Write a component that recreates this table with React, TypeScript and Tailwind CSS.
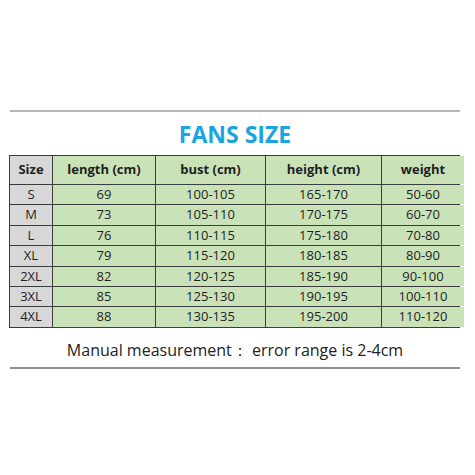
import React from "react";

const rows = [
  ["S", "69", "100-105", "165-170", "50-60"],
  ["M", "73", "105-110", "170-175", "60-70"],
  ["L", "76", "110-115", "175-180", "70-80"],
  ["XL", "79", "115-120", "180-185", "80-90"],
  ["2XL", "82", "120-125", "185-190", "90-100"],
  ["3XL", "85", "125-130", "190-195", "100-110"],
  ["4XL", "88", "130-135", "195-200", "110-120"],
];

const headers = ["Size", "length\u00a0(cm)", "bust\u00a0(cm)", "height\u00a0(cm)", "weight"];

const App: React.FC = () => {
  return (
    <div
      className="w-[475px] h-[475px] bg-white pt-[110px] px-[10px] text-[#1f1f1f]"
      style={{ fontFamily: '"Open Sans", "Noto Sans", sans-serif' }}
    >
      <div className="w-[450px] border-t-2 border-[#b5b5b5]">
        <h1 className="text-center text-[23px] font-bold text-[#1ba3e4] leading-none pt-[11px] pb-[9px]">
          FANS SIZE
        </h1>
        <div className="grid grid-cols-[42px_102px_109px_115px_82px] gap-px bg-[#3c3c3c] border border-[#3c3c3c] w-[451px] -ml-px">
          {headers.map((h, i) => (
            <div
              key={h}
              className={`h-[28px] flex items-center justify-center text-[13px] font-bold ${
                i === 0 ? "bg-[#d8d8d8]" : "bg-[#c9e2b8]"
              }`}
            >
              {h}
            </div>
          ))}
          {rows.map((r) =>
            r.map((c, i) => (
              <div
                key={r[0] + i}
                className={`h-[19.4px] flex items-center justify-center text-[13px] ${
                  i === 0 ? "bg-[#d8d8d8]" : "bg-[#c9e2b8]"
                }`}
              >
                {c}
              </div>
            ))
          )}
        </div>
        <p className="text-center text-[16px] text-[#222] pt-[10px] pb-[5px] leading-[24px]">
          Manual measurement：&nbsp;error range is 2-4cm
        </p>
        <div className="border-t-2 border-[#8f8f8f]" />
      </div>
    </div>
  );
};

export default App;
